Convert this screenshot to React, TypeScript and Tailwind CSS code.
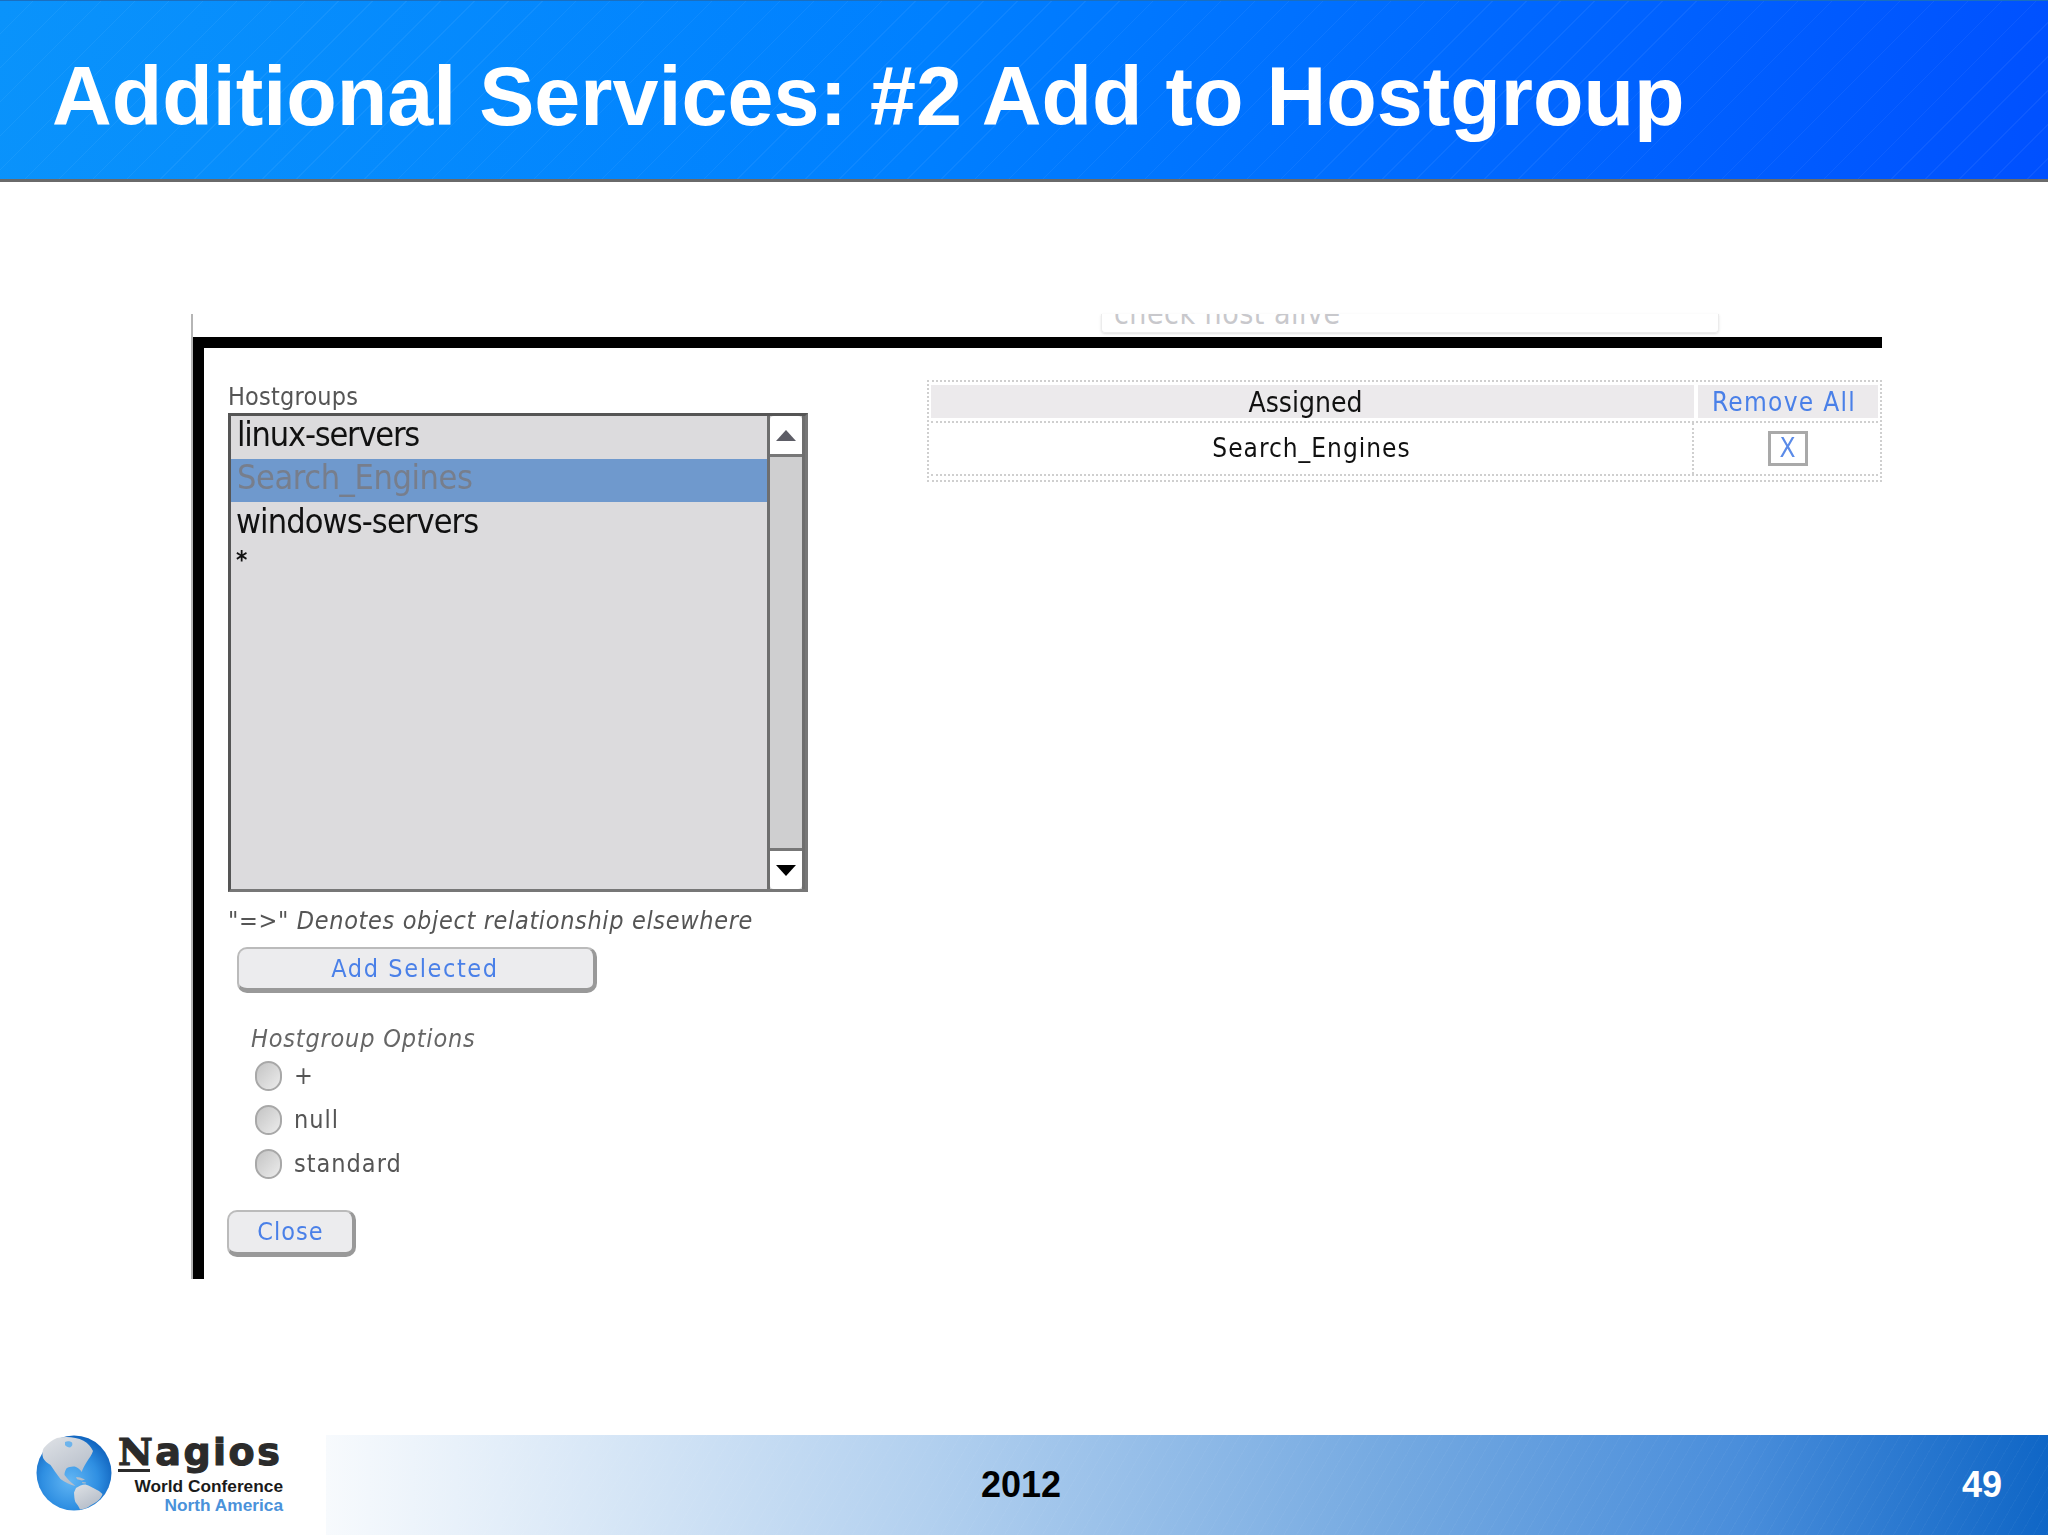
const narrow = "font-['DejaVu_Sans_Condensed','Liberation_Sans',sans-serif]";

function Globe() {
  return (
    <svg viewBox="0 0 76 76" className="h-[76px] w-[76px] shrink-0">
      <defs>
        <radialGradient id="sea" cx="0.45" cy="0.6" r="0.62">
          <stop offset="0" stopColor="#62b6f4" />
          <stop offset="0.6" stopColor="#2f8fe2" />
          <stop offset="1" stopColor="#0f62bd" />
        </radialGradient>
        <linearGradient id="land" x1="0" y1="0" x2="0.6" y2="1">
          <stop offset="0" stopColor="#dfe2e6" />
          <stop offset="1" stopColor="#b4bcc8" />
        </linearGradient>
      </defs>
      <circle cx="38" cy="38" r="37.5" fill="url(#sea)" />
      <path
        d="M7.600 13.300C12 8 16 5 21 3c9-2 19-1 26.500 2.700C52 8 55 12 57 16c-1 4-4 7-6 10.600-2 3-4 7-5.400 10.400-1-2-3-4-5.600-5-3-1-7 0-9.600 1.400-1 2-2 4-1.900 6.600 3 4 7 8 11 11-5-1-11-4-15-7-4-5-7-10-10-14-3-2-6-4-7.400-7-1-3-1-7 .500-9.700z"
        fill="url(#land)"
      />
      <path d="M29 7c2-1 5-1 7 .500 1 2 0 4-2 5-2 0-4-1-5-2.500z" fill="#6db4ec" />
      <path d="M40 42l4 .600 5 2-3 .800-5-1.200zM46 47l4 .500-.500 1-3-.300z" fill="#b6bec8" />
      <path
        d="M40 53c3-2 6-3.500 9.400-3.600 4 1 8 3.500 11.600 5.600 2 1 4 2.500 5.500 4-1 3-3 5.500-5.500 7.500-3 2-6 3.500-8.600 5.500-2 1-4 2-8.400 2.500-1-3-3-5-4.700-7.500-1-3-1-6-1.300-9.500z"
        fill="url(#land)"
      />
    </svg>
  );
}

function Logo() {
  return (
    <div className="flex w-[326px] shrink-0 items-start bg-white pl-[36px]">
      <Globe />
      <div className="ml-[6px] flex w-[165px] flex-col items-end">
        <div className="relative -mt-[4px] h-[38px] w-full font-['DejaVu_Sans',sans-serif] text-[38px] leading-[42px] font-bold tracking-[2.5px] text-[#2b2b2b] [-webkit-text-stroke:1.2px_#2b2b2b]">
          <span className="font-['DejaVu_Serif',serif]">N</span>agios
          <span className="absolute bottom-[-3px] left-0 h-[3px] w-[32px] bg-[#2b2b2b]" />
        </div>
        <div className="mt-[8px] text-[17.3px] leading-[19px] font-bold text-[#1a1a1a]">World Conference</div>
        <div className="text-[17.3px] leading-[19px] font-bold text-[#4a92da]">North America</div>
      </div>
    </div>
  );
}

function Radio({ label }: { label: string }) {
  return (
    <div className="flex h-[44px] items-center gap-[12px]">
      <span className="h-[30px] w-[27px] rounded-full border-2 border-[#a8a8a8] bg-gradient-to-br from-[#c4c4c4] to-[#ececec]" />
      <span className={`${narrow} text-[25px] tracking-[1px] text-[#555]`}>{label}</span>
    </div>
  );
}

function Listbox() {
  return (
    <div className="flex h-[479px] w-[580px] border-[3px] border-[#555] border-b-[#777] border-r-[#777] bg-[#dcdbdd]">
      <div className={`${narrow} flex-1 pt-[1px] text-[34px] text-[#111]`}>
        <div className="h-[42px] pl-[6px] leading-[35px] tracking-[-1.2px]">linux-servers</div>
        <div className="h-[43px] bg-[#6f99cd] pl-[6px] leading-[36px] tracking-[-0.4px] text-[#777e8c]">Search_Engines</div>
        <div className="h-[43px] pl-[5px] leading-[38px] tracking-[-0.9px]">windows-servers</div>
        <div className="pl-[5px] text-[24px] leading-[30px] font-bold">*</div>
      </div>
      <div className="flex w-[38px] flex-col justify-between border-x-[3px] border-[#6e6e6e] bg-[#cfcfd0]">
        <div className="flex h-[41px] items-center justify-center rounded-t-[4px] border-b-[3px] border-[#777] bg-white">
          <span className="h-0 w-0 border-x-[10px] border-b-[11px] border-x-transparent border-b-[#5d5d66]" />
        </div>
        <div className="flex h-[41px] items-center justify-center rounded-b-[4px] border-t-[3px] border-[#777] bg-white">
          <span className="h-0 w-0 border-x-[10px] border-t-[11px] border-x-transparent border-t-black" />
        </div>
      </div>
    </div>
  );
}

function AssignedTable() {
  return (
    <div className={`${narrow} w-[955px] border-2 border-dotted border-[#cfcfcf] px-[2px] pt-[3px] pb-[4px]`}>
      <div className="flex h-[33px] gap-[4px] leading-[35px]">
        <div className="flex-1 bg-[#eceaec] pr-[14px] text-center text-[28px] text-[#111]">Assigned</div>
        <div className="w-[180px] bg-[#eceaec] pr-[8px] text-center text-[26px] tracking-[1.3px] text-[#4a80e8]">Remove All</div>
      </div>
      <div className="mt-[3px] flex h-[55px] gap-[4px] border-y-2 border-dotted border-[#cfcfcf] text-[26px] tracking-[1px]">
        <div className="flex flex-1 items-center justify-center border-r-2 border-dotted border-[#cfcfcf] text-[#111]">Search_Engines</div>
        <div className="flex w-[180px] items-center justify-center">
          <span className="flex h-[35px] w-[40px] items-center justify-center border-[3px] border-[#a9a9a9] text-[#5b8be8]">X</span>
        </div>
      </div>
    </div>
  );
}

function Dialog() {
  return (
    <div className="ml-[191px] flex w-[1691px] flex-col border-l-2 border-[#b5b5b5]">
      <div className="flex h-[23px] pl-[908px]">
        <div className="h-[19px] w-[618px] overflow-hidden rounded-b-[4px] border-x border-b border-[#ececec] pl-[12px] leading-[0px] shadow-sm">
          <span className={`${narrow} text-[30px] tracking-[0.5px] text-[#c8c8cc]`}>check host alive</span>
        </div>
      </div>
      <div className="flex h-[942px] border-t-[11px] border-l-[11px] border-black pt-[45px] pl-[24px] blur-[0.5px]">
        <div className="flex w-[660px] flex-col">
          <div className={`${narrow} h-[20px] text-[25px] leading-[8px] tracking-[0.2px] text-[#555]`}>Hostgroups</div>
          <Listbox />
          <div className={`${narrow} mt-[14px] text-[25px] leading-[30px] tracking-[0.65px] text-[#555] italic`}>"=&gt;" Denotes object relationship elsewhere</div>
          <div className={`${narrow} ml-[9px] mt-[11px] flex h-[46px] w-[360px] items-center justify-center rounded-[10px] border-2 border-[#bbb] border-b-[5px] border-r-[4px] border-b-[#999] border-r-[#999] bg-[#ececee] pr-[2px] text-[25px] tracking-[1.6px] text-[#4a80e8]`}>Add Selected</div>
          <div className={`${narrow} ml-[23px] mt-[31px] text-[25px] leading-[30px] tracking-[0.8px] text-[#666] italic`}>Hostgroup Options</div>
          <div className="ml-[27px]">
            <Radio label="+" />
            <Radio label="null" />
            <Radio label="standard" />
          </div>
          <div className={`${narrow} -ml-[1px] mt-[24px] flex h-[47px] w-[129px] items-center justify-center rounded-[10px] border-2 border-[#bbb] border-b-[5px] border-r-[4px] border-b-[#999] border-r-[#999] bg-[#ececee] text-[25px] tracking-[1px] text-[#4a80e8]`}>Close</div>
        </div>
        <div className="ml-[39px] -mt-[13px]">
          <AssignedTable />
        </div>
      </div>
    </div>
  );
}

export default function App() {
  return (
    <div className="flex h-[1535px] w-[2048px] flex-col bg-white font-['Liberation_Sans',sans-serif]">
      <header className="flex h-[182px] shrink-0 items-center border-t border-b-[3px] border-t-[#1a6fc0] border-b-[#6a6a6a] bg-[repeating-linear-gradient(135deg,transparent_0,transparent_23px,rgba(255,255,255,0.05)_23px,rgba(255,255,255,0.05)_24px),linear-gradient(100deg,#0a93fb,#0080ff_45%,#0050ff)] pt-[14px] pl-[52px]">
        <h1 className="text-[82.7px] leading-none font-bold text-white">Additional Services: #2 Add to Hostgroup</h1>
      </header>
      <main className="flex-1 pt-[132px]">
        <Dialog />
      </main>
      <footer className="flex h-[100px] shrink-0">
        <Logo />
        <div className="relative flex flex-1 items-center justify-end bg-[repeating-linear-gradient(120deg,transparent_0,transparent_10px,rgba(255,255,255,0.03)_10px,rgba(255,255,255,0.03)_11px),linear-gradient(90deg,#f7fafd,#b2d0ef_35%,#74a9e1_62%,#4a8edb_82%,#0f66c6)] pr-[46px]">
          <span className="absolute left-[655px] text-[36px] font-bold text-black">2012</span>
          <span className="text-[36px] font-bold text-white">49</span>
        </div>
      </footer>
    </div>
  );
}
